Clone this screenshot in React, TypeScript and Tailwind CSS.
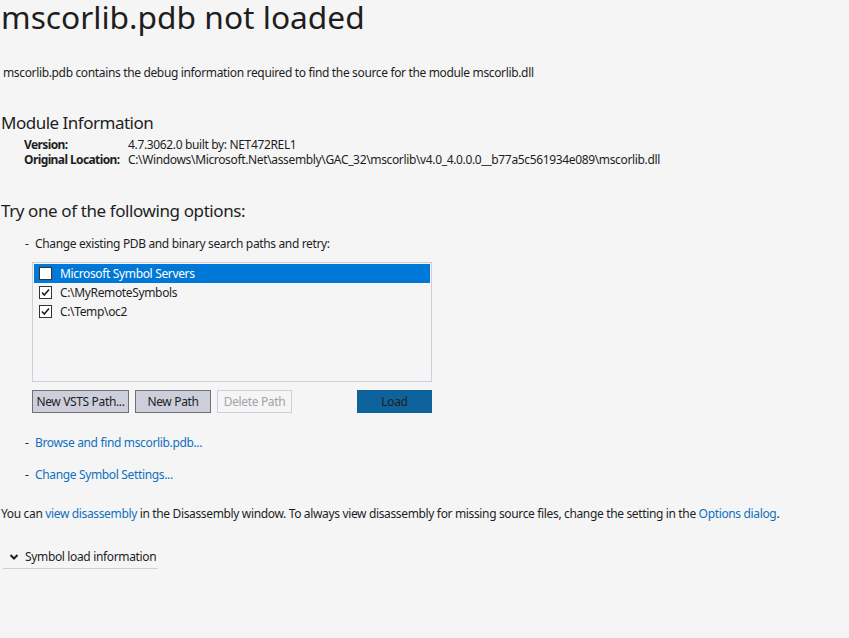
import React from "react";

const font = { fontFamily: '"Noto Sans", "Open Sans", sans-serif' };

function Check({ checked }: { checked: boolean }) {
  return (
    <span className="w-[13px] h-[13px] bg-white border border-[#333337] flex items-center justify-center shrink-0">
      {checked && (
        <svg width="11" height="11" viewBox="0 0 11 11">
          <path d="M2 5.5 L4.3 8 L9 2.5" fill="none" stroke="#1e1e1e" strokeWidth="1.6" />
        </svg>
      )}
    </span>
  );
}

export default function App() {
  const rows = [
    { label: "Microsoft Symbol Servers", checked: false, selected: true },
    { label: "C:\\MyRemoteSymbols", checked: true, selected: false },
    { label: "C:\\Temp\\oc2", checked: true, selected: false },
  ];
  return (
    <div className="w-[849px] h-[638px] bg-[#f5f5f5] text-[#1e1e1e] overflow-hidden tracking-[-0.35px]" style={font}>
      <h1 className="text-[31.7px] leading-[34px] pl-[1px] font-normal tracking-normal whitespace-nowrap">mscorlib.pdb not loaded</h1>
      <p className="text-[12px] leading-[16px] pl-[3px] mt-[31px]">
        mscorlib.pdb contains the debug information required to find the source for the module mscorlib.dll
      </p>
      <h2 className="text-[17px] leading-[22px] pl-[1px] mt-[31px] tracking-[-0.5px]">Module Information</h2>
      <div className="pl-[24px] text-[12px] leading-[15px] mt-[3px] whitespace-nowrap">
        <div className="flex">
          <span className="w-[104px] font-bold tracking-[-0.6px]">Version:</span>
          <span>4.7.3062.0 built by: NET472REL1</span>
        </div>
        <div className="flex">
          <span className="w-[104px] font-bold tracking-[-0.6px]">Original Location:</span>
          <span>C:\Windows\Microsoft.Net\assembly\GAC_32\mscorlib\v4.0_4.0.0.0__b77a5c561934e089\mscorlib.dll</span>
        </div>
      </div>
      <h2 className="text-[17px] leading-[22px] pl-[1px] mt-[33px] tracking-[-0.4px]">Try one of the following options:</h2>
      <div className="pl-[25px] text-[12px] leading-[16px] mt-[14px] flex">
        <span className="w-[10px]">-</span>
        <span>Change existing PDB and binary search paths and retry:</span>
      </div>
      <div className="ml-[32px] mt-[10px] w-[400px]">
        <div className="h-[120px] border border-[#cccedb] p-[1px]">
          {rows.map((r) => (
            <div
              key={r.label}
              className={`h-[19px] flex items-center gap-[8px] pl-[5px] text-[12px] ${r.selected ? "bg-[#0078d7] text-white" : ""}`}
            >
              <Check checked={r.checked} />
              <span>{r.label}</span>
            </div>
          ))}
        </div>
        <div className="flex mt-[8px] text-[12px] h-[23px]">
          <button className="w-[97px] bg-[#cccedb] border border-[#707070] text-[#1e1e1e]">New VSTS Path...</button>
          <button className="w-[76px] ml-[6px] bg-[#cccedb] border border-[#707070] text-[#1e1e1e]">New Path</button>
          <button className="w-[75px] ml-[6px] bg-[#f5f5f5] border border-[#cccedb] text-[#a2a4a5]">Delete Path</button>
          <button className="w-[75px] ml-auto bg-[#0e639c] text-[#1e1e1e]">Load</button>
        </div>
      </div>
      <div className="pl-[25px] text-[12px] leading-[16px] mt-[22px] flex">
        <span className="w-[10px]">-</span>
        <span className="text-[#0e70c0]">Browse and find mscorlib.pdb...</span>
      </div>
      <div className="pl-[25px] text-[12px] leading-[16px] mt-[16px] flex">
        <span className="w-[10px]">-</span>
        <span className="text-[#0e70c0]">Change Symbol Settings...</span>
      </div>
      <p className="text-[12px] leading-[16px] pl-[1px] mt-[23px] whitespace-nowrap">
        You can <span className="text-[#0e70c0]">view disassembly</span> in the Disassembly window. To always view disassembly for missing source files, change the setting in the <span className="text-[#0e70c0]">Options dialog</span>.
      </p>
      <div className="ml-[3px] mt-[23px] w-[155px] border-b border-[#cccedb] h-[24px] flex items-center text-[12px] whitespace-nowrap">
        <svg width="10" height="10" viewBox="0 0 10 10" className="ml-[6px] mr-[6px] shrink-0">
          <path d="M1.5 3 L5 6.5 L8.5 3" fill="none" stroke="#1e1e1e" strokeWidth="2" />
        </svg>
        <span>Symbol load information</span>
      </div>
    </div>
  );
}
